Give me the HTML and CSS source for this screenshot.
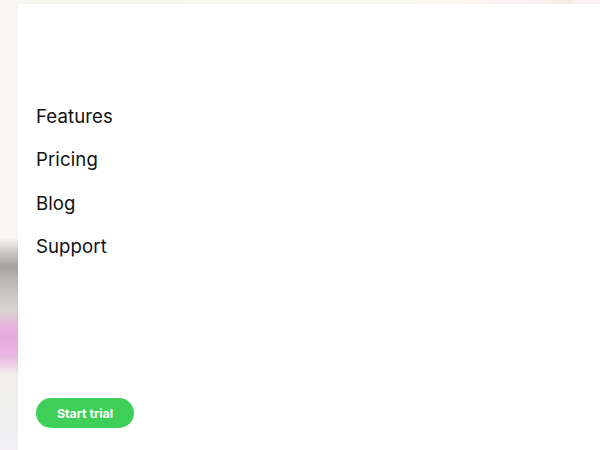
FILE: index.html
```html
<!DOCTYPE html>
<html lang="en">
<head>
<meta charset="utf-8">
<title>Menu</title>
<link rel="stylesheet" href="styles.css">
</head>
<body>
<div class="backdrop">
  <div class="backdrop-top"></div>
  <div class="backdrop-side"></div>
</div>
<aside class="drawer">
  <nav class="menu">
    <a class="menu-link" href="#">Features</a>
    <a class="menu-link" href="#">Pricing</a>
    <a class="menu-link" href="#">Blog</a>
    <a class="menu-link" href="#">Support</a>
  </nav>
  <div class="drawer-footer">
    <a class="cta" href="#">Start trial</a>
  </div>
</aside>
</body>
</html>
```
FILE: styles.css
```css
html, body {
  margin: 0;
  padding: 0;
  width: 600px;
  height: 450px;
  overflow: hidden;
  background: #faf7f4;
  font-family: Inter, "Noto Sans", sans-serif;
}
.backdrop {
  width: 600px;
  height: 450px;
  position: relative;
}
.backdrop-top {
  height: 4px;
  background: linear-gradient(90deg, #f9f7f4 0%, #faf7f5 80%, #fcf3f3 90%, #f4e9e9 95%, #fcf3f3 96%, #fbf6f5 100%);
}
.backdrop-side {
  position: absolute;
  left: 0;
  top: 0;
  width: 18px;
  height: 450px;
  background: linear-gradient(180deg,
    #faf6f2 0px, #faf6f2 238px,
    #dedcd8 246px, #a3a2a0 266px, #b8b6b3 280px,
    #cbc9c5 296px, #d8d4d0 310px,
    #e7b4dd 324px, #e8a9de 338px, #eab8e2 356px,
    #f1ecec 374px, #efefec 398px, #efeeee 420px, #f3f1f6 450px);
}
.drawer {
  position: absolute;
  left: 18px;
  top: 4px;
  right: 0;
  bottom: 0;
  background: #ffffff;
  box-shadow: 0 0 4px rgba(0,0,0,0.03);
  display: flex;
  flex-direction: column;
  padding: 98px 18px 22px 18px;
  box-sizing: border-box;
}
.menu {
  display: flex;
  flex-direction: column;
  gap: 15px;
}
.menu-link {
  color: #111111;
  text-decoration: none;
  font-size: 18.6px;
  line-height: 28.4px;
  letter-spacing: 0.1px;
}
.drawer-footer {
  margin-top: auto;
}
.cta {
  display: inline-flex;
  align-items: center;
  justify-content: center;
  width: 98px;
  height: 30px;
  border-radius: 15px;
  background: #3ecf58;
  color: #ffffff;
  font-weight: 700;
  font-size: 12.4px;
  text-decoration: none;
}
```
